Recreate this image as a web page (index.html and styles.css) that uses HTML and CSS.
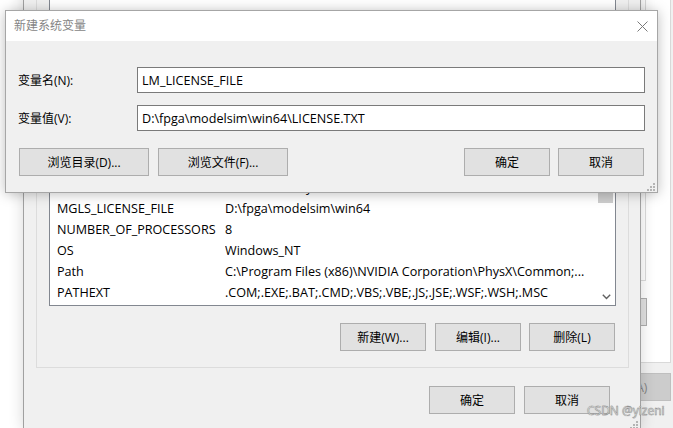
FILE: index.html
```html
<!DOCTYPE html>
<html lang="zh-CN">
<head>
<meta charset="utf-8">
<title>新建系统变量</title>
<link rel="stylesheet" href="styles.css">
</head>
<body>
<div class="desk">

  <div class="sysprop">
    <div class="tabpage">
      <div class="tp-group"></div>
      <div class="btn tp-envbtn">环境变量(N)...</div>
    </div>
    <div class="sys-actions">
      <div class="btn disabled">应用(A)</div>
    </div>
  </div>

  <div class="envwin">
    <div class="group">
      <div class="list">
        <div class="rows">
          <div class="row"><span>DriverData</span><span>C:\Windows\System32\Drivers\DriverData</span></div>
          <div class="row"><span>MGLS_LICENSE_FILE</span><span>D:\fpga\modelsim\win64</span></div>
          <div class="row"><span>NUMBER_OF_PROCESSORS</span><span>8</span></div>
          <div class="row"><span>OS</span><span>Windows_NT</span></div>
          <div class="row"><span>Path</span><span>C:\Program Files (x86)\NVIDIA Corporation\PhysX\Common;...</span></div>
          <div class="row"><span>PATHEXT</span><span>.COM;.EXE;.BAT;.CMD;.VBS;.VBE;.JS;.JSE;.WSF;.WSH;.MSC</span></div>
        </div>
        <div class="vscroll">
          <div class="vs-space"></div>
          <div class="vs-thumb"></div>
          <div class="vs-track"></div>
          <div class="vs-arrow">
            <svg width="9" height="6" viewBox="0 0 9 6"><path d="M0.8 0.8 L4.5 4.5 L8.2 0.8" fill="none" stroke="#606060" stroke-width="1.4"/></svg>
          </div>
        </div>
      </div>
      <div class="btnrow">
        <div class="btn first">新建(W)...</div>
        <div class="btn">编辑(I)...</div>
        <div class="btn">删除(L)</div>
      </div>
    </div>
    <div class="actions">
      <div class="btn">确定</div>
      <div class="btn">取消</div>
    </div>
    <svg class="grip env-grip" width="8" height="8" viewBox="0 0 8 8"><g fill="#b4b4b4"><rect x="6" y="0" width="2" height="2"/><rect x="3" y="3" width="2" height="2"/><rect x="6" y="3" width="2" height="2"/><rect x="0" y="6" width="2" height="2"/><rect x="3" y="6" width="2" height="2"/><rect x="6" y="6" width="2" height="2"/></g></svg>
  </div>

  <div class="dialog">
    <div class="titlebar">
      <span class="title">新建系统变量</span>
      <svg class="close" width="11" height="11" viewBox="0 0 11 11"><path d="M0.5 0.5 L10.5 10.5 M10.5 0.5 L0.5 10.5" stroke="#7a7a7a" stroke-width="1"/></svg>
    </div>
    <div class="dbody">
      <div class="field">
        <span class="label">变量名(N):</span>
        <div class="input">LM_LICENSE_FILE</div>
      </div>
      <div class="field">
        <span class="label">变量值(V):</span>
        <div class="input">D:\fpga\modelsim\win64\LICENSE.TXT</div>
      </div>
      <div class="dbtns">
        <div class="bgroup">
          <div class="btn wide">浏览目录(D)...</div>
          <div class="btn wide">浏览文件(F)...</div>
        </div>
        <div class="bgroup tight">
          <div class="btn">确定</div>
          <div class="btn">取消</div>
        </div>
      </div>
    </div>
    <svg class="grip dlg-grip" width="8" height="8" viewBox="0 0 8 8"><g fill="#b4b4b4"><rect x="6" y="0" width="2" height="2"/><rect x="3" y="3" width="2" height="2"/><rect x="6" y="3" width="2" height="2"/><rect x="0" y="6" width="2" height="2"/><rect x="3" y="6" width="2" height="2"/><rect x="6" y="6" width="2" height="2"/></g></svg>
  </div>

  <div class="watermark">CSDN @yizeni</div>
</div>
</body>
</html>
```

FILE: styles.css
```css
body {
  margin: 0;
  width: 673px;
  height: 428px;
  overflow: hidden;
  background: #ffffff;
  font-family: "Open Sans", "Noto Sans CJK SC", sans-serif;
  font-size: 12px;
  color: #000;
}

.desk {
  position: relative;
  width: 673px;
  height: 428px;
  overflow: hidden;
}

.btn {
  box-sizing: border-box;
  width: 86px;
  height: 28px;
  display: flex;
  align-items: center;
  justify-content: center;
  background: #e1e1e1;
  border: 1px solid #adadad;
  white-space: nowrap;
  flex: none;
}
.btn.wide { width: 130px; }
.btn.disabled {
  background: #cccccc;
  border-color: #bfbfbf;
  color: #838383;
}

/* ---------- background: system properties window ---------- */
.sysprop {
  position: absolute;
  left: 540px;
  top: -20px;
  width: 133px;
  height: 460px;
  background: #f0f0f0;
  display: flex;
  flex-direction: column;
  z-index: 1;
}
.tabpage {
  box-sizing: border-box;
  height: 383px;
  margin-right: 2px;
  border: 1px solid #d9d9d9;
  background: #fff;
  padding: 9px 23px 0 0;
  display: flex;
  flex-direction: column;
  align-items: flex-end;
}
.tp-group {
  box-sizing: border-box;
  width: 100px;
  height: 291px;
  margin-right: 1px;
  border: 1px solid #dcdcdc;
}
.tp-envbtn {
  width: 130px;
  margin-top: 17px;
}
.sys-actions {
  padding: 10px 2px 0 0;
  display: flex;
  justify-content: flex-end;
}

/* ---------- environment variables window ---------- */
.envwin {
  position: absolute;
  left: 23px;
  top: -40px;
  width: 618px;
  height: 470px;
  box-sizing: border-box;
  border: 1px solid #a0a0a0;
  background: #f0f0f0;
  box-shadow: 0 0 14px rgba(0, 0, 0, 0.16);
  padding: 9px 11px 0 12px;
  display: flex;
  flex-direction: column;
  z-index: 2;
}
.group {
  border: 1px solid #dcdcdc;
  padding: 10px 12px 16px 12px;
  display: flex;
  flex-direction: column;
}
.list {
  box-sizing: border-box;
  height: 325px;
  border: 1px solid #828790;
  background: #fff;
  display: flex;
  overflow: hidden;
}
.rows {
  flex: 1;
  min-width: 0;
  display: flex;
  flex-direction: column;
  justify-content: flex-end;
  padding-bottom: 2px;
}
.row {
  display: grid;
  grid-template-columns: 168px 1fr;
  height: 21px;
  line-height: 21px;
  padding-left: 7px;
  white-space: nowrap;
  font-size: 12.6px;
}
.row span { overflow: hidden; }

.vscroll {
  width: 17px;
  flex: none;
  display: flex;
  flex-direction: column;
  background: #fff;
}
.vs-space { height: 168px; flex: none; }
.vs-thumb { height: 53px; flex: none; background: #cdcdcd; margin-right: 2px; }
.vs-track { flex: 1; }
.vs-arrow {
  height: 17px;
  flex: none;
  display: flex;
  align-items: center;
  justify-content: center;
}

.btnrow {
  margin-top: 17px;
  display: flex;
  justify-content: flex-end;
  gap: 8px;
  padding-right: 1px;
}
.btnrow .first { margin-right: 1px; }

.actions {
  margin-top: 18px;
  display: flex;
  justify-content: flex-end;
  gap: 9px;
  padding-right: 19px;
}

.grip { position: absolute; display: block; }
.env-grip { right: 2px; bottom: 0; }

/* ---------- new system variable dialog ---------- */
.dialog {
  position: absolute;
  left: 5px;
  top: 10px;
  width: 653px;
  height: 183px;
  box-sizing: border-box;
  border: 1px solid #a6a6a6;
  background: #f0f0f0;
  box-shadow: 0 1px 12px rgba(0, 0, 0, 0.26);
  display: flex;
  flex-direction: column;
  z-index: 3;
}
.titlebar {
  height: 30px;
  flex: none;
  background: #fff;
  display: flex;
  align-items: center;
  justify-content: space-between;
  padding: 0 9px 0 8px;
}
.title {
  color: #858585;
  font-size: 12px;
  line-height: 16px;
}
.close { display: block; }

.dbody {
  flex: 1;
  padding: 26px 12px 16px 12px;
  display: flex;
  flex-direction: column;
}
.field {
  display: flex;
  align-items: center;
  height: 26px;
}
.field + .field { margin-top: 12px; }
.label {
  width: 119px;
  flex: none;
}
.input {
  flex: 1;
  height: 26px;
  box-sizing: border-box;
  border: 1px solid #7a7a7a;
  background: #fff;
  padding-left: 4px;
  display: flex;
  align-items: center;
  white-space: nowrap;
  font-size: 12.6px;
}
.dbtns {
  margin-top: 17px;
  display: flex;
  justify-content: space-between;
  padding: 0 1px;
}
.bgroup { display: flex; gap: 9px; }
.bgroup.tight { gap: 8px; }
.dlg-grip { right: 2px; bottom: 1px; }

/* ---------- watermark ---------- */
.watermark {
  position: absolute;
  left: 587px;
  top: 404px;
  font-size: 12px;
  line-height: 14px;
  color: #f4f4f4;
  -webkit-text-stroke: 0.35px #7a7a7a;
  text-shadow: 0 0 1px #8a8a8a;
  z-index: 4;
  white-space: nowrap;
}
```
